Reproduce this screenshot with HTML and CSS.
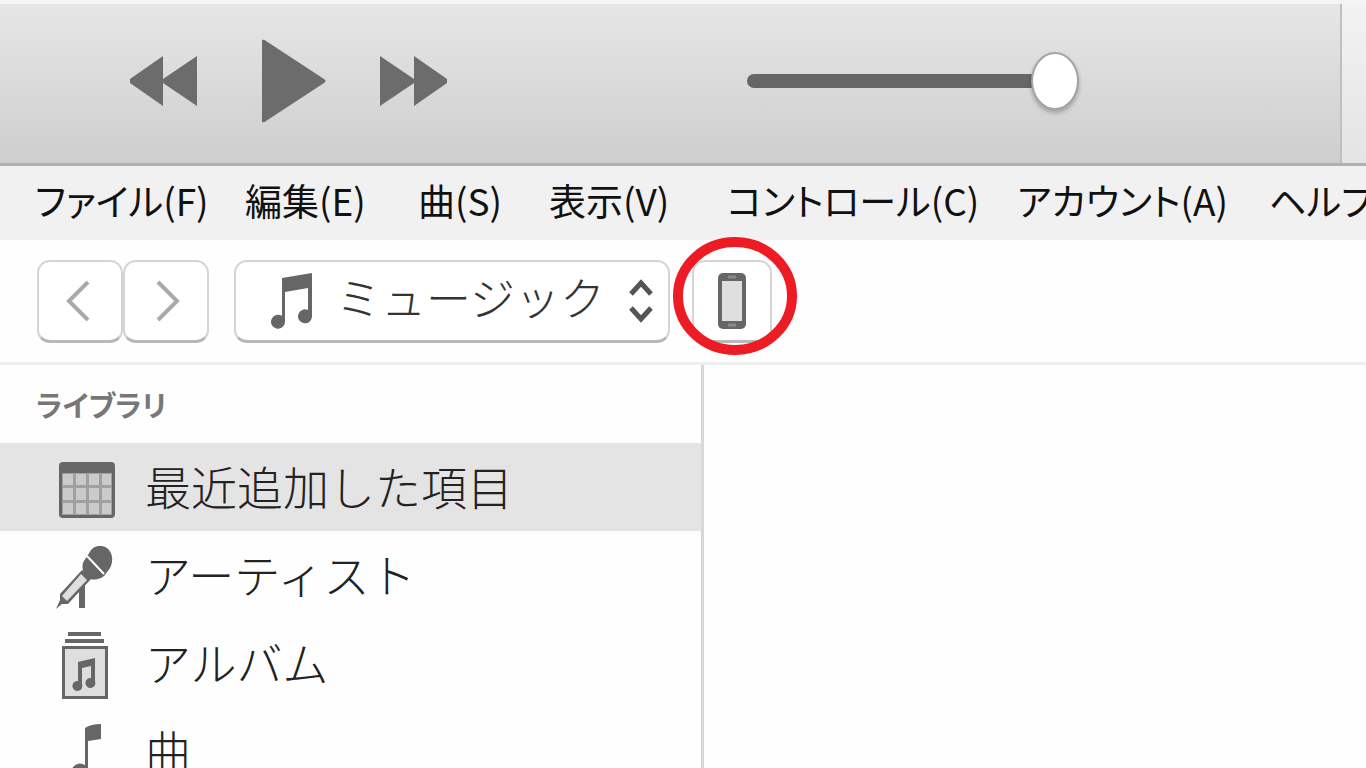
FILE: index.html
```html
<!DOCTYPE html>
<html lang="ja">
<head>
    <meta charset="UTF-8">
    <meta name="viewport" content="width=device-width, initial-scale=1.0">
    <title>ミュージック</title>
    <link rel="stylesheet" href="styles.css">
</head>
<body>

<header class="player">
    <div class="controls">
        <button type="button" class="control" aria-label="前へ">
            <svg width="68" height="52" viewBox="0 0 68 52"><path d="M0 24 33 1V24L67 1V51L33 28V51L0 28Z"/></svg>
        </button>
        <button type="button" class="control" aria-label="再生">
            <svg width="64" height="84" viewBox="0 0 64 84"><path d="M0 1 Q2 0 4 2L62 40Q65 42 62 44L4 82Q2 84 0 83Z"/></svg>
        </button>
        <button type="button" class="control" aria-label="次へ">
            <svg width="68" height="52" viewBox="0 0 68 52"><path d="M67 24 34 1V24L0 1V51L34 28V51L67 28Z"/></svg>
        </button>
        <input type="range" class="volume" min="0" max="100" value="100" aria-label="音量">
    </div>
    <div class="display"></div>
</header>

<nav class="menubar">
    <button type="button">ファイル(F)</button>
    <button type="button">編集(E)</button>
    <button type="button">曲(S)</button>
    <button type="button">表示(V)</button>
    <button type="button">コントロール(C)</button>
    <button type="button">アカウント(A)</button>
    <button type="button">ヘルプ</button>
</nav>

<div class="toolbar">
    <div class="history">
        <button type="button" class="box" aria-label="戻る">
            <svg width="28" height="44" viewBox="0 0 28 44"><path class="arrow" d="M22 3 3 22 22 41"/></svg>
        </button>
        <button type="button" class="box" aria-label="進む">
            <svg width="28" height="44" viewBox="0 0 28 44"><path class="arrow" d="M6 3 25 22 6 41"/></svg>
        </button>
    </div>
    <label class="box picker">
        <svg width="44" height="56" viewBox="0 0 44 56"><path d="M12 5 42 0V43A7 7 0 1 1 38 37V15L15 19V49A7 7 0 1 1 12 43Z"/></svg>
        <select aria-label="メディアの種類">
            <option>ミュージック</option>
        </select>
        <svg width="26" height="44" viewBox="0 0 26 44"><path class="updown" d="M3 15 13 4 23 15M3 29 13 40 23 29"/></svg>
    </label>
    <div class="device">
        <button type="button" class="box" aria-label="デバイス">
            <svg width="28" height="56" viewBox="0 0 28 56">
                <rect width="28" height="56" rx="5"/>
                <rect class="light" x="4" y="8" width="20" height="40"/>
                <path class="detail" d="M10 4H18M10 52H18"/>
            </svg>
        </button>
        <svg class="ring" width="124" height="118" viewBox="0 0 124 118"><ellipse cx="62" cy="59" rx="57" ry="54"/></svg>
    </div>
</div>

<div class="main">
    <aside class="sidebar">
        <h2>ライブラリ</h2>
        <ul>
            <li>
                <a href="#" class="active">
                    <svg width="64" height="64" viewBox="0 0 64 64">
                        <rect x="6" y="4" width="56" height="56" rx="4"/>
                        <rect x="9" y="15" width="50" height="42" fill="#a0a0a0"/>
                        <path fill="#cacaca" d="M10 16H20V27H10ZM23 16H33V27H23ZM36 16H46V27H36ZM49 16H58V27H49ZM10 30H20V42H10ZM23 30H33V42H23ZM36 30H46V42H36ZM49 30H58V42H49ZM10 45H20V56H10ZM23 45H33V56H23ZM36 45H46V56H36ZM49 45H58V56H49Z"/>
                    </svg>
                    <span>最近追加した項目</span>
                </a>
            </li>
            <li>
                <a href="#">
                    <svg width="64" height="64" viewBox="0 0 64 64">
                        <path d="M26 38 32 32V62H26Z"/>
                        <path d="M29 24 38 33 15 58 9 58 3 63 7 54 7 48Z"/>
                        <path class="light" d="M28 28 34 34 14 55 9 50Z"/>
                        <path d="M38 4C43-2 52-1 56 4C61 10 60 20 54 26C50 34 40 35 35 32C28 27 28 17 33 12Z"/>
                        <path d="M34 10 51 28" fill="none" stroke="#fff" stroke-width="2"/>
                    </svg>
                    <span>アーティスト</span>
                </a>
            </li>
            <li>
                <a href="#">
                    <svg width="64" height="68" viewBox="0 0 64 68">
                        <path d="M15 0H48V4H15ZM12 7H51V11H12ZM9 14H55V67H9Z"/>
                        <rect class="light" x="12" y="17" width="40" height="47"/>
                        <path d="M25 30 42 26V49A5 5 0 1 1 38 46V34L29 36V52A5 5 0 1 1 25 49Z"/>
                    </svg>
                    <span>アルバム</span>
                </a>
            </li>
            <li>
                <a href="#">
                    <svg width="64" height="60" viewBox="0 0 64 60"><path d="M32 4Q38 0 48 0V15L35 17V46A8 7 0 1 1 32 41Z"/></svg>
                    <span>曲</span>
                </a>
            </li>
        </ul>
    </aside>
    <main class="content"></main>
</div>

</body>
</html>
```

FILE: styles.css
```css
* {
    box-sizing: border-box;
}
body {
    margin: 0;
    height: 100vh;
    display: flex;
    flex-direction: column;
    overflow: hidden;
    background-color: #fefefe;
    color: #222;
    font-family: "Noto Sans CJK JP", sans-serif;
}
button {
    padding: 0;
    border: none;
    background: none;
    font: inherit;
    color: inherit;
    cursor: pointer;
}
svg {
    display: block;
    flex: none;
    fill: #666;
}
.light {
    fill: #dedede;
}

/* player */
.player {
    display: flex;
    flex: none;
    height: 166px;
    border-top: 4px solid #f4f4f4;
    border-bottom: 3px solid #b0b0b0;
    background: linear-gradient(#e6e6e6, #cecece);
}
.controls {
    flex: 1;
    display: flex;
    align-items: center;
    padding: 0 0 6px 130px;
}
.control {
    margin-right: 54px;
}
.control:nth-child(1) {
    margin-right: 64px;
}
.control svg {
    fill: #6c6c6c;
}
.volume {
    appearance: none;
    width: 332px;
    height: 60px;
    margin: 0 0 0 245px;
    background: none;
}
.volume::-webkit-slider-runnable-track {
    height: 14px;
    border-radius: 7px;
    background-color: #666;
}
.volume::-webkit-slider-thumb {
    appearance: none;
    width: 48px;
    height: 58px;
    margin-top: -22px;
    border: 2px solid #a4a4a4;
    border-radius: 50%;
    background-color: #fff;
    box-shadow: 0 3px 4px rgba(0, 0, 0, 0.25);
}
.display {
    width: 26px;
    border-left: 2px solid #c0c0c0;
    background: linear-gradient(#f2f2f2, #e4e4e4);
}

/* menu */
.menubar {
    display: grid;
    grid-template-columns: 210px 173px 131px 178px 290px 252px 1fr;
    flex: none;
    height: 74px;
    padding-left: 35px;
    overflow: hidden;
    background-color: #f1f1f1;
    color: #111;
    font-size: 37px;
    line-height: 66px;
    font-feature-settings: "palt";
    white-space: nowrap;
}
.menubar button {
    padding-bottom: 6px;
    text-align: left;
}

/* toolbar */
.toolbar {
    display: flex;
    flex: none;
    height: 125px;
    padding: 20px 37px;
    border-bottom: 3px solid #efefef;
}
.history {
    display: flex;
    margin-right: 25px;
}
.box {
    display: flex;
    align-items: center;
    justify-content: center;
    width: 86px;
    height: 83px;
    border: 2px solid #d4d4d4;
    border-bottom: 3px solid #b8b8b8;
    border-radius: 13px;
    background-color: #fff;
}
.arrow {
    fill: none;
    stroke: #aaa;
    stroke-width: 4;
}
.updown {
    fill: none;
    stroke: #555;
    stroke-width: 5;
}
.picker {
    justify-content: flex-start;
    width: 436px;
    padding: 0 14px 0 34px;
    margin-right: 22px;
}
.picker select {
    flex: 1;
    min-width: 0;
    appearance: none;
    padding: 0 0 8px;
    margin-left: 22px;
    border: none;
    background: none;
    color: #333;
    font: 300 45px/64px "Noto Sans CJK JP", sans-serif;
}
.device {
    position: relative;
}
.device .box {
    width: 80px;
}
.detail {
    stroke: #8a8a8a;
    stroke-width: 3;
}
.ring {
    position: absolute;
    top: -23px;
    left: -19px;
    fill: none;
    stroke: #ed1c24;
    stroke-width: 10;
    pointer-events: none;
}

/* library */
.main {
    display: flex;
    flex: 1;
    min-height: 0;
}
.sidebar {
    flex: none;
    width: 704px;
    border-right: 3px solid #d8d8d8;
}
.sidebar h2 {
    margin: 0;
    padding-left: 36px;
    color: #777;
    font-size: 29px;
    line-height: 78px;
    font-feature-settings: "palt";
}
.sidebar ul {
    margin: 0;
    padding: 0;
    list-style: none;
}
.sidebar a {
    display: flex;
    align-items: center;
    gap: 28px;
    height: 88px;
    padding-left: 53px;
    color: #222;
    font-size: 46px;
    font-weight: 300;
    text-decoration: none;
}
.sidebar a svg {
    margin-top: 6px;
}
.sidebar a span {
    padding-bottom: 4px;
}
.sidebar a.active {
    background-color: #e4e4e4;
}
.content {
    flex: 1;
}
```
